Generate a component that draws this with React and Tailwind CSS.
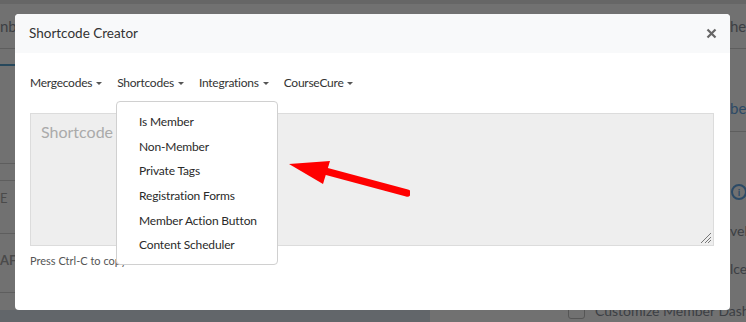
const menus = ["Mergecodes", "Shortcodes", "Integrations", "CourseCure"];
const items = [
  "Is Member",
  "Non-Member",
  "Private Tags",
  "Registration Forms",
  "Member Action Button",
  "Content Scheduler",
];

function Caret() {
  return (
    <span className="ml-[4px] inline-block w-0 h-0 border-x-[3px] border-x-transparent border-t-[3px] border-t-[#555]" />
  );
}

function Backdrop() {
  return (
    <div className="absolute inset-0 flex flex-col bg-[#717171] text-[#3c3f44]">
      <div className="h-[4px] bg-[#666]" />
      <div className="flex-1 flex justify-between overflow-hidden">
        <div className="w-[15px] flex flex-col overflow-hidden whitespace-nowrap">
          <div className="h-[45px] border-b border-[#5e5e5e] pt-[13px] text-[15px] leading-[18px]">nbe</div>
          <div className="h-[17px] border-b-2 border-[#27485c]" />
          <div className="h-[98px] border-b border-[#5e5e5e]" />
          <div className="h-[17px] border-b border-[#5e5e5e]" />
          <div className="h-[53px] border-b border-[#5e5e5e] pt-[8px] text-[13px] text-[#4a4a4a]">E</div>
          <div className="h-[59px] border-b border-[#5e5e5e] pt-[17px] text-[13px] font-bold text-[#4a4a4a]">AF</div>
        </div>
        <div className="w-[16px] flex flex-col overflow-hidden whitespace-nowrap">
          <div className="h-[45px] border-b border-[#5e5e5e] pt-[13px] text-[15px] leading-[18px]">he</div>
          <div className="h-[83px] border-b border-[#5e5e5e] pt-[50px] text-[15px] leading-[18px] text-[#2c4a66]">be</div>
          <div className="pt-[52px] pl-[1px]">
            <div className="w-[16px] h-[16px] rounded-full border-2 border-[#2c4a66] text-[10px] font-bold text-[#2c4a66] flex items-center justify-center">i</div>
          </div>
          <div className="pt-[22px] text-[14px] leading-[18px]">vel</div>
          <div className="pt-[20px] text-[14px] leading-[18px]">lce</div>
        </div>
      </div>
      <div className="h-[12px] flex">
        <div className="w-[430px] bg-[#62666a]" />
      </div>
    </div>
  );
}

export default function App() {
  return (
    <div
      className="relative w-[746px] h-[322px] overflow-hidden"
      style={{ fontFamily: "Lato, 'Open Sans', sans-serif" }}
    >
      <Backdrop />
      <div className="absolute left-[568px] top-[302px] flex items-center gap-[10px] whitespace-nowrap text-[14px] text-[#3c3f44]">
        <span className="w-[17px] h-[17px] rounded-[3px] border border-[#555]" />
        <span className="leading-[14px]">Customize Member Dash</span>
      </div>
      <div className="absolute left-[15px] top-[14px] w-[715px] h-[296px] bg-white rounded-[4px] overflow-hidden">
        <div className="h-[39px] bg-[#f8f9fa] pl-[14px] pr-[13px] flex items-center justify-between">
          <span className="text-[13.5px] text-[#333]">Shortcode Creator</span>
          <svg width="11" height="11" viewBox="0 0 11 11">
            <path d="M1.5 1.5 L9.5 9.5 M9.5 1.5 L1.5 9.5" stroke="#666" strokeWidth="2.2" />
          </svg>
        </div>
        <div className="px-[15px]">
          <div className="mt-[21px] flex gap-[15px] text-[12px] tracking-[-0.25px] text-[#333] leading-[18px]">
            {menus.map((m) => (
              <span key={m} className="flex items-center">
                {m}
                <Caret />
              </span>
            ))}
          </div>
          <div className="mt-[21px] relative w-[684px] h-[133px] bg-[#eeeeee] border border-[#dcdcdc] px-[10px] py-[6px]">
            <span className="text-[16px] text-[#aaa]">Shortcode</span>
            <svg className="absolute right-[1px] bottom-[1px]" width="14" height="14" viewBox="0 0 14 14">
              <path d="M13 3 L3 13 M13 7 L7 13 M13 10 L10 13" stroke="#777" strokeWidth="1" />
            </svg>
          </div>
          <div className="mt-[7px] text-[11px] text-[#555]">Press Ctrl-C to copy</div>
        </div>

        <div className="absolute left-[101px] top-[87px] w-[162px] h-[164px] bg-white border border-[#d0d0d0] rounded-[4px] py-[8px]">
          {items.map((it) => (
            <div key={it} className="h-[24.6px] pl-[22px] flex items-center text-[12px] tracking-[-0.15px] text-[#2a2a2a]">
              {it}
            </div>
          ))}
        </div>

        <svg className="absolute left-[265px] top-[140px]" width="130" height="45" viewBox="0 0 130 45">
          <path d="M45 17 L127 39" stroke="#ff0000" strokeWidth="7.5" strokeLinecap="round" />
          <polygon points="9,10 50,7 43,30" fill="#ff0000" />
        </svg>
      </div>
    </div>
  );
}
